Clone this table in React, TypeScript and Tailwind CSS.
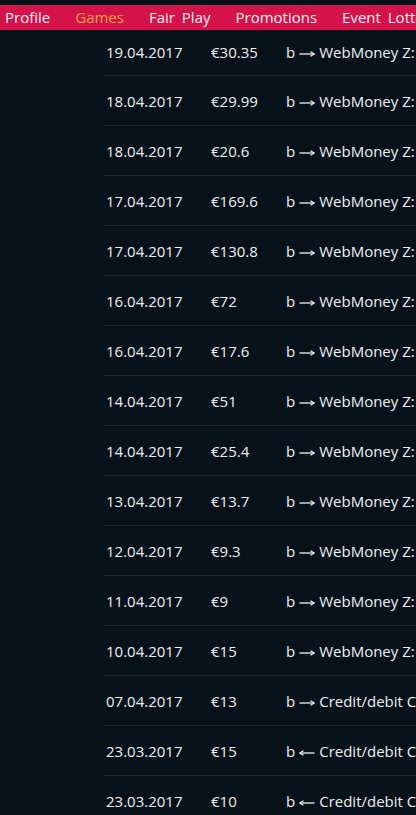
import React from "react";

const rows: [string, string, boolean, string][] = [
  ["19.04.2017", "€30.35", true, "WebMoney Z: 1"],
  ["18.04.2017", "€29.99", true, "WebMoney Z: 1"],
  ["18.04.2017", "€20.6", true, "WebMoney Z: 1"],
  ["17.04.2017", "€169.6", true, "WebMoney Z: 1"],
  ["17.04.2017", "€130.8", true, "WebMoney Z: 1"],
  ["16.04.2017", "€72", true, "WebMoney Z: 1"],
  ["16.04.2017", "€17.6", true, "WebMoney Z: 1"],
  ["14.04.2017", "€51", true, "WebMoney Z: 1"],
  ["14.04.2017", "€25.4", true, "WebMoney Z: 1"],
  ["13.04.2017", "€13.7", true, "WebMoney Z: 1"],
  ["12.04.2017", "€9.3", true, "WebMoney Z: 1"],
  ["11.04.2017", "€9", true, "WebMoney Z: 1"],
  ["10.04.2017", "€15", true, "WebMoney Z: 1"],
  ["07.04.2017", "€13", true, "Credit/debit Card"],
  ["23.03.2017", "€15", false, "Credit/debit Card"],
  ["23.03.2017", "€10", false, "Credit/debit Card"],
];

function Arrow({ right }: { right: boolean }) {
  return (
    <svg
      width="16"
      height="8"
      viewBox="0 0 16 8"
      className="ml-[4px] mr-[4px] mt-[3px] shrink-0"
      fill="none"
      stroke="#eef0f2"
      strokeWidth="1.3"
      style={right ? undefined : { transform: "scaleX(-1)" }}
    >
      <line x1="0.5" y1="4" x2="15" y2="4" />
      <polyline points="11.5,1.8 15.3,4 11.5,6.2" strokeLinejoin="miter" />
    </svg>
  );
}

export default function App() {
  return (
    <div
      className="w-[416px] h-[815px] overflow-hidden bg-[#07111a] text-[#eef0f2] text-[15px]"
      style={{ fontFamily: '"Open Sans", "DejaVu Sans", sans-serif' }}
    >
      <div className="pt-[5px]">
        <nav className="h-[25px] bg-[#d3134a] flex items-center pl-[5px] gap-[25px] whitespace-nowrap text-[15px] leading-none [word-spacing:3px]">
          <span>Profile</span>
          <span className="text-[#f7a33a]">Games</span>
          <span>Fair Play</span>
          <span>Promotions</span>
          <span>Event Lottery</span>
        </nav>
      </div>
      <div className="ml-[104px]">
        {rows.map((r, i) => (
          <div
            key={i}
            className={
              i === 0
                ? "h-[45px] pb-[1px] flex items-center pl-[2px] whitespace-nowrap"
                : "h-[50px] pt-[2px] border-t border-[#18232e] flex items-center pl-[2px] whitespace-nowrap"
            }
          >
            <span className="w-[105px] shrink-0">{r[0]}</span>
            <span className="w-[75px] shrink-0">{r[1]}</span>
            <span className="shrink-0 flex items-center">
              <span>b</span>
              <Arrow right={r[2]} />
              <span>{r[3]}</span>
            </span>
          </div>
        ))}
      </div>
    </div>
  );
}
